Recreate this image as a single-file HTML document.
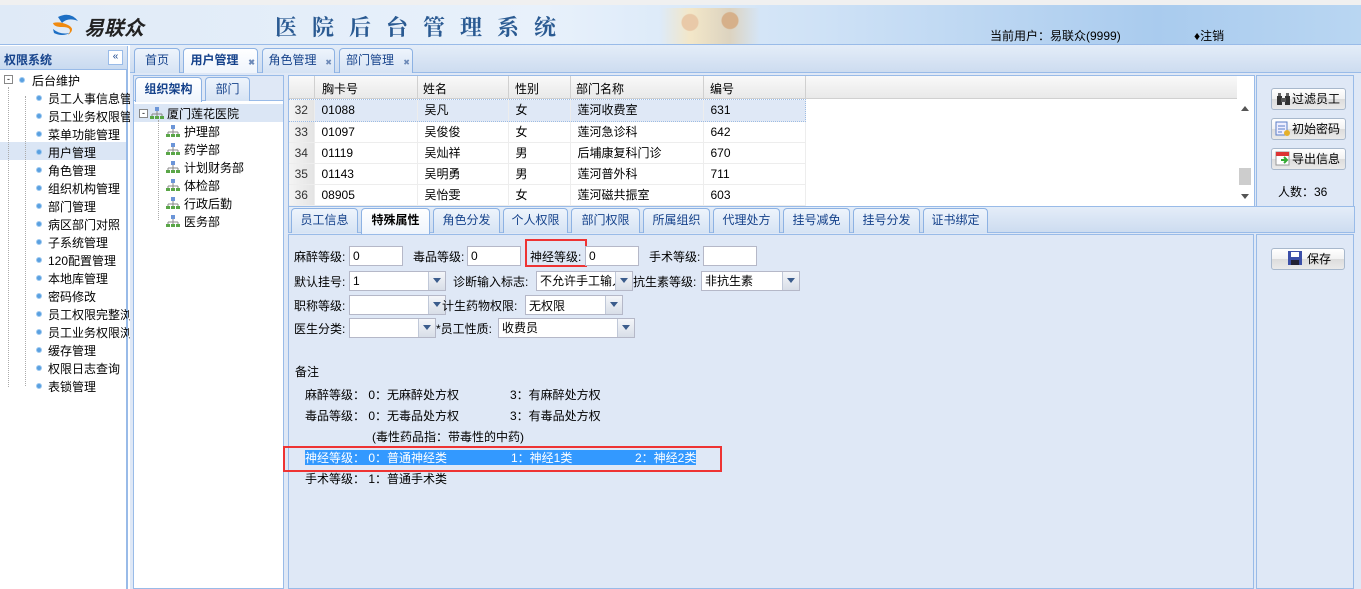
<!DOCTYPE html>
<html><head><meta charset="utf-8"><style>
*{margin:0;padding:0;box-sizing:border-box}
body{width:1361px;height:589px;overflow:hidden;position:relative;background:#fff;font-family:"Liberation Sans","Noto Sans CJK SC",sans-serif;font-size:12px;color:#000}
.a{position:absolute}
.tab{position:absolute;border:1px solid #8db2e3;border-bottom:none;border-radius:4px 4px 0 0;background:linear-gradient(#eef4fc,#d6e3f4);color:#15428b;text-align:center;font-size:12px}
.tab.on{background:#fff;color:#15428b;font-weight:bold;background:linear-gradient(#fff,#eef4fc)}
.x{position:absolute;top:2px;font-size:8px;color:#6d8ab8;right:2px}
.tree div{position:absolute;left:48px;white-space:nowrap}
.dot{position:absolute;width:6px;height:6px;border-radius:3px;background:#5aa0e0;border:1px solid #9cc8f0}
.inp{position:absolute;height:20px;background:#fff;border:1px solid #b5b8c8;padding-left:3px;line-height:18px;font-size:12px;overflow:hidden;white-space:nowrap}
.sel::after{content:"";position:absolute;right:0;top:0;width:16px;height:18px;background:linear-gradient(#f4f6fa,#d8dee8);border-left:1px solid #c0c8d8}
.sel::before{content:"";position:absolute;right:4px;top:6px;z-index:2;border:4px solid transparent;border-top:5px solid #3b5c8c}
.lb{position:absolute;white-space:nowrap;font-size:12px}
.btn{position:absolute;border:1px solid #a8b8cc;border-radius:3px;background:linear-gradient(#fff 0,#f2f2f2 50%,#dcdcdc 51%,#eaeaea);height:22px;line-height:20px;font-size:12px;padding-left:20px}
.gr td{height:21px;line-height:20px;border-right:1px solid #ededed;border-bottom:1px solid #ededed;padding-left:7px;white-space:nowrap}
.gr td.n{background:linear-gradient(90deg,#f4f4f4,#e4e4e4);padding:0 0 0 0;text-align:center;color:#333}
</style></head><body>
<div class="a" style="left:0;top:0;width:1361px;height:5px;background:#f0f0f0"></div>
<div class="a" style="left:0;top:5px;width:1361px;height:40px;background:linear-gradient(90deg,#dfeaf7 0,#e8f1fb 40%,#cfe2f6 60%,#a9cbee 85%,#b9d6f2);border-bottom:1px solid #99bbe8"></div>
<svg class="a" style="left:50px;top:13px" width="30" height="24"><path d="M8 4 Q20 -2 28 8 Q18 4 12 10Z" fill="#1d6fc4"/><path d="M3 10 Q10 8 18 12 Q26 16 18 22 Q24 14 12 14 Q4 14 3 10Z" fill="#f08a10"/><path d="M3 16 Q10 22 20 20 Q12 24 4 20Z" fill="#1d6fc4"/></svg>
<div class="a" style="left:84px;top:12px;font-size:20px;font-weight:bold;font-style:italic;color:#222">易联众</div>
<div class="a" style="left:275px;top:11px;font-size:22px;font-weight:bold;color:#2a5a92;letter-spacing:15px;font-family:'Noto Serif CJK SC',serif">医院后台管理系统</div>
<div class="a" style="left:660px;top:8px;width:100px;height:36px;background:radial-gradient(circle at 30% 40%,#e9c9a8 0 8px,transparent 9px),radial-gradient(circle at 70% 35%,#d6b08a 0 8px,transparent 9px),linear-gradient(90deg,transparent,#f3e7c8 30%,#dcd3c0 70%,transparent)"></div>
<div class="a" style="left:990px;top:27px">当前用户：易联众(9999)</div>
<div class="a" style="left:1194px;top:27px">♦注销</div>
<div class="a" style="left:0;top:46px;width:128px;height:543px;border-right:2px solid #99bbe8;background:#fff"></div>
<div class="a" style="left:0;top:46px;width:127px;height:24px;background:linear-gradient(#dfe9f6,#c9daf0);border-bottom:1px solid #99bbe8;font-weight:bold;color:#15428b;padding:5px 0 0 4px">权限系统</div>
<div class="a" style="left:108px;top:50px;width:15px;height:15px;border:1px solid #99bbe8;background:#fff;font-size:10px;color:#15428b;text-align:center;line-height:12px">«</div>
<div class="a" style="left:0;top:142px;width:126px;height:18px;background:#dbe6f5"></div>
<div class="a" style="left:8px;top:87px;height:300px;border-left:1px dotted #aaa"></div>
<div class="a" style="left:4px;top:75px;width:9px;height:9px;border:1px solid #888;background:#fff;font-size:9px;line-height:6px;text-align:center">-</div>
<div class="dot" style="left:19px;top:77px"></div>
<div class="a" style="left:32px;top:72px">后台维护</div>
<div class="tree">
<div style="top:90px">员工人事信息管</div><div style="top:108px">员工业务权限管</div><div style="top:126px">菜单功能管理</div><div style="top:144px">用户管理</div><div style="top:162px">角色管理</div><div style="top:180px">组织机构管理</div><div style="top:198px">部门管理</div><div style="top:216px">病区部门对照</div><div style="top:234px">子系统管理</div><div style="top:252px">120配置管理</div><div style="top:270px">本地库管理</div><div style="top:288px">密码修改</div><div style="top:306px">员工权限完整浏</div><div style="top:324px">员工业务权限浏</div><div style="top:342px">缓存管理</div><div style="top:360px">权限日志查询</div><div style="top:378px">表锁管理</div>
</div>
<div class="a" style="left:25px;top:96px;height:290px;border-left:1px dotted #aaa"></div>
<div class="dot" style="left:36px;top:95px"></div><div class="dot" style="left:36px;top:113px"></div><div class="dot" style="left:36px;top:131px"></div><div class="dot" style="left:36px;top:149px"></div><div class="dot" style="left:36px;top:167px"></div><div class="dot" style="left:36px;top:185px"></div><div class="dot" style="left:36px;top:203px"></div><div class="dot" style="left:36px;top:221px"></div><div class="dot" style="left:36px;top:239px"></div><div class="dot" style="left:36px;top:257px"></div><div class="dot" style="left:36px;top:275px"></div><div class="dot" style="left:36px;top:293px"></div><div class="dot" style="left:36px;top:311px"></div><div class="dot" style="left:36px;top:329px"></div><div class="dot" style="left:36px;top:347px"></div><div class="dot" style="left:36px;top:365px"></div><div class="dot" style="left:36px;top:383px"></div>
<div class="a" style="left:130px;top:45px;width:1231px;height:28px;background:linear-gradient(#e4edf8,#cddcf0);border-bottom:1px solid #99bbe8"></div>
<div class="tab" style="left:134px;top:48px;width:46px;height:25px;line-height:23px">首页</div>
<div class="tab on" style="left:183px;top:48px;width:75px;height:26px;line-height:23px;padding-right:12px">用户管理<span class="x">✖</span></div>
<div class="tab" style="left:262px;top:48px;width:73px;height:25px;line-height:23px;padding-right:12px">角色管理<span class="x">✖</span></div>
<div class="tab" style="left:339px;top:48px;width:74px;height:25px;line-height:23px;padding-right:12px">部门管理<span class="x">✖</span></div>
<div class="a" style="left:130px;top:73px;width:1231px;height:516px;background:#dfe8f6"></div>
<div class="a" style="left:133px;top:75px;width:151px;height:514px;border:1px solid #99bbe8;background:#fff"></div>
<div class="a" style="left:134px;top:76px;width:149px;height:25px;background:#dfe8f6;border-bottom:1px solid #99bbe8"></div>
<div class="tab on" style="left:135px;top:77px;width:67px;height:25px;line-height:22px">组织架构</div>
<div class="tab" style="left:205px;top:77px;width:45px;height:24px;line-height:22px">部门</div>
<div class="a" style="left:134px;top:104px;width:149px;height:18px;background:#dbe6f5"></div>
<div class="a" style="left:139px;top:109px;width:9px;height:9px;border:1px solid #888;background:#fff;font-size:9px;line-height:6px;text-align:center">-</div>
<svg class="a" style="left:150px;top:107px" width="14" height="12"><rect x="5" y="0" width="4" height="4" fill="#6b95d8"/><path d="M7 4v3M2 7h10M2 7v2M7 7v2M12 7v2" stroke="#888" fill="none"/><rect x="0" y="9" width="4" height="3" fill="#5aa648"/><rect x="5" y="9" width="4" height="3" fill="#5aa648"/><rect x="10" y="9" width="4" height="3" fill="#5aa648"/></svg>
<div class="a" style="left:167px;top:105px">厦门莲花医院</div>
<div class="a" style="left:158px;top:120px;height:100px;border-left:1px dotted #aaa"></div>
<div class="a" style="left:184px;top:123px;line-height:18px">护理部<br>药学部<br>计划财务部<br>体检部<br>行政后勤<br>医务部</div>
<svg class="a" style="left:166px;top:125px" width="14" height="104"><g id="g"><rect x="5" y="0" width="4" height="4" fill="#6b95d8"/><path d="M7 4v3M2 7h10M2 7v2M7 7v2M12 7v2" stroke="#888" fill="none"/><rect x="0" y="9" width="4" height="3" fill="#5aa648"/><rect x="5" y="9" width="4" height="3" fill="#5aa648"/><rect x="10" y="9" width="4" height="3" fill="#5aa648"/></g><use href="#g" y="18"/><use href="#g" y="36"/><use href="#g" y="54"/><use href="#g" y="72"/><use href="#g" y="90"/></svg>
<div class="a" style="left:288px;top:75px;width:967px;height:132px;border:1px solid #99bbe8;background:#fff"></div>
<div class="a" style="left:289px;top:76px;width:948px;height:23px;background:linear-gradient(#f9f9f9,#e9e9e9);border-bottom:1px solid #d0d0d0"></div>
<div class="a" style="left:289px;top:76px;width:948px;height:23px;color:#000">
<span class="a" style="left:33px;top:4px">胸卡号</span><span class="a" style="left:134px;top:4px">姓名</span><span class="a" style="left:226px;top:4px">性别</span><span class="a" style="left:287px;top:4px">部门名称</span><span class="a" style="left:421px;top:4px">编号</span>
<span class="a" style="left:25px;top:0;height:23px;border-left:1px solid #d0d0d0"></span><span class="a" style="left:128px;top:0;height:23px;border-left:1px solid #d0d0d0"></span><span class="a" style="left:219px;top:0;height:23px;border-left:1px solid #d0d0d0"></span><span class="a" style="left:281px;top:0;height:23px;border-left:1px solid #d0d0d0"></span><span class="a" style="left:414px;top:0;height:23px;border-left:1px solid #d0d0d0"></span><span class="a" style="left:516px;top:0;height:23px;border-left:1px solid #d0d0d0"></span>
</div>
<table class="a gr" style="left:289px;top:100px;border-collapse:collapse;width:516px;table-layout:fixed">
<col style="width:25px"><col style="width:103px"><col style="width:91px"><col style="width:62px"><col style="width:133px"><col style="width:102px">
<tr style="background:#dfe8f6;outline:1px dotted #99bbe8"><td class="n">32</td><td>01088</td><td>吴凡</td><td>女</td><td>莲河收费室</td><td>631</td></tr>
<tr><td class="n">33</td><td>01097</td><td>吴俊俊</td><td>女</td><td>莲河急诊科</td><td>642</td></tr>
<tr><td class="n">34</td><td>01119</td><td>吴灿祥</td><td>男</td><td>后埔康复科门诊</td><td>670</td></tr>
<tr><td class="n">35</td><td>01143</td><td>吴明勇</td><td>男</td><td>莲河普外科</td><td>711</td></tr>
<tr><td class="n">36</td><td>08905</td><td>吴怡雯</td><td>女</td><td>莲河磁共振室</td><td>603</td></tr>
</table>
<div class="a" style="left:1237px;top:100px;width:17px;height:106px;background:#fff"></div>
<div class="a" style="left:1241px;top:106px;border:4px solid transparent;border-bottom:5px solid #555;border-top:none"></div>
<div class="a" style="left:1241px;top:194px;border:4px solid transparent;border-top:5px solid #555;border-bottom:none"></div>
<div class="a" style="left:1239px;top:168px;width:12px;height:17px;background:#cdcdcd"></div>
<div class="a" style="left:1256px;top:75px;width:98px;height:132px;border:1px solid #99bbe8;background:#dfe8f6"></div>
<div class="btn" style="left:1271px;top:88px;width:75px">过滤员工</div>
<div class="btn" style="left:1271px;top:118px;width:75px">初始密码</div>
<div class="btn" style="left:1271px;top:148px;width:75px">导出信息</div>
<svg class="a" style="left:1276px;top:92px" width="15" height="14"><rect x="1" y="4" width="5" height="9" fill="#333"/><rect x="9" y="4" width="5" height="9" fill="#333"/><rect x="5" y="6" width="5" height="4" fill="#555"/><rect x="2" y="1" width="3" height="3" fill="#666"/><rect x="10" y="1" width="3" height="3" fill="#666"/></svg>
<svg class="a" style="left:1275px;top:121px" width="16" height="16"><rect x="1" y="1" width="11" height="13" fill="#eef" stroke="#5b7fc7"/><path d="M3 5h7M3 8h7M3 11h4" stroke="#5b7fc7"/><circle cx="12" cy="12" r="3" fill="#e5b02a"/></svg>
<svg class="a" style="left:1275px;top:150px" width="16" height="16"><rect x="1" y="2" width="13" height="13" fill="#fff" stroke="#999"/><rect x="1" y="2" width="13" height="4" fill="#d33"/><path d="M6 10h5M9 7l3 3-3 3" stroke="#3a3" stroke-width="2" fill="none"/></svg>
<div class="a" style="left:1278px;top:183px">人数：36</div>
<div class="a" style="left:288px;top:206px;width:1067px;height:27px;background:linear-gradient(#e4edf8,#cddcf0);border:1px solid #99bbe8"></div>
<div class="tab" style="left:291px;top:208px;width:67px;height:25px;line-height:23px">员工信息</div>
<div class="tab on" style="left:361px;top:208px;width:69px;height:26px;line-height:23px;color:#000">特殊属性</div>
<div class="tab" style="left:433px;top:208px;width:67px;height:25px;line-height:23px">角色分发</div>
<div class="tab" style="left:503px;top:208px;width:65px;height:25px;line-height:23px">个人权限</div>
<div class="tab" style="left:571px;top:208px;width:69px;height:25px;line-height:23px">部门权限</div>
<div class="tab" style="left:643px;top:208px;width:67px;height:25px;line-height:23px">所属组织</div>
<div class="tab" style="left:713px;top:208px;width:67px;height:25px;line-height:23px">代理处方</div>
<div class="tab" style="left:783px;top:208px;width:67px;height:25px;line-height:23px">挂号减免</div>
<div class="tab" style="left:853px;top:208px;width:67px;height:25px;line-height:23px">挂号分发</div>
<div class="tab" style="left:923px;top:208px;width:65px;height:25px;line-height:23px">证书绑定</div>
<div class="a" style="left:288px;top:234px;width:966px;height:355px;border:1px solid #99bbe8;background:#dfe8f6"></div>
<div class="a" style="left:1256px;top:234px;width:98px;height:355px;border:1px solid #99bbe8;background:#dfe8f6"></div>
<div class="btn" style="left:1271px;top:248px;width:74px;padding-left:35px">保存</div>
<svg class="a" style="left:1288px;top:251px" width="14" height="14"><rect x="0" y="0" width="14" height="14" fill="#3b4fa8"/><rect x="3" y="1" width="8" height="5" fill="#fff"/><rect x="3" y="9" width="8" height="5" fill="#223"/></svg>
<span class="lb" style="left:294px;top:248px">麻醉等级:</span><div class="inp" style="left:349px;top:246px;width:54px">0</div>
<span class="lb" style="left:413px;top:248px">毒品等级:</span><div class="inp" style="left:467px;top:246px;width:54px">0</div>
<div class="a" style="left:525px;top:239px;width:62px;height:28px;border:2px solid #ee3333"></div>
<span class="lb" style="left:530px;top:248px">神经等级:</span><div class="inp" style="left:585px;top:246px;width:54px">0</div>
<span class="lb" style="left:649px;top:248px">手术等级:</span><div class="inp" style="left:703px;top:246px;width:54px"></div>
<span class="lb" style="left:294px;top:273px">默认挂号:</span><div class="inp sel" style="left:349px;top:271px;width:97px">1</div>
<span class="lb" style="left:453px;top:273px">诊断输入标志:</span><div class="inp sel" style="left:536px;top:271px;width:97px">不允许手工输入</div>
<span class="lb" style="left:633px;top:273px">抗生素等级:</span><div class="inp sel" style="left:701px;top:271px;width:99px">非抗生素</div>
<span class="lb" style="left:294px;top:297px">职称等级:</span><div class="inp sel" style="left:349px;top:295px;width:97px"></div>
<span class="lb" style="left:442px;top:297px">计生药物权限:</span><div class="inp sel" style="left:525px;top:295px;width:98px"></div>
<span class="lb" style="left:529px;top:297px">无权限</span>
<span class="lb" style="left:294px;top:320px">医生分类:</span><div class="inp sel" style="left:349px;top:318px;width:87px"></div>
<span class="lb" style="left:436px;top:320px">*员工性质:</span><div class="inp sel" style="left:498px;top:318px;width:137px">收费员</div>
<span class="lb" style="left:295px;top:363px">备注</span>
<span class="lb" style="left:305px;top:386px">麻醉等级：&nbsp;0：无麻醉处方权</span><span class="lb" style="left:510px;top:386px">3：有麻醉处方权</span>
<span class="lb" style="left:305px;top:407px">毒品等级：&nbsp;0：无毒品处方权</span><span class="lb" style="left:510px;top:407px">3：有毒品处方权</span>
<span class="lb" style="left:372px;top:428px">(毒性药品指：带毒性的中药)</span>
<div class="a" style="left:283px;top:446px;width:439px;height:26px;border:2px solid #ee3333"></div>
<div class="a" style="left:305px;top:450px;width:391px;height:15px;background:#3399ff"></div>
<span class="lb" style="left:305px;top:449px;color:#fff">神经等级：&nbsp;0：普通神经类</span><span class="lb" style="left:511px;top:449px;color:#fff">1：神经1类</span><span class="lb" style="left:635px;top:449px;color:#fff">2：神经2类</span>
<span class="lb" style="left:305px;top:470px">手术等级：&nbsp;1：普通手术类</span>
</body></html>
